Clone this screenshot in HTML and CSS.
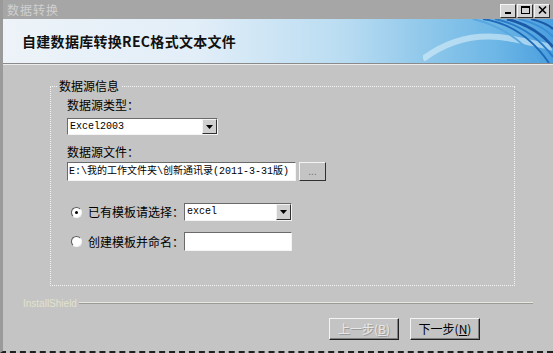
FILE: index.html
```html
<!DOCTYPE html>
<html>
<head>
<meta charset="utf-8">
<link rel="stylesheet" href="styles.css">
</head>
<body>
<div class="window">
  <div class="titlebar">
    <span class="title">数据转换</span>
    <div class="ctrls">
      <span class="cb"><svg width="13" height="11" viewBox="0 0 13 11"><rect x="3" y="7" width="6" height="2" fill="#000"/></svg></span>
      <span class="cb"><svg width="13" height="11" viewBox="0 0 13 11"><rect x="2.5" y="1.5" width="8" height="7" fill="none" stroke="#000"/><rect x="2" y="1" width="9" height="2" fill="#000"/></svg></span>
      <span class="cb"><svg width="13" height="11" viewBox="0 0 13 11"><path d="M3 1.5 L10 8.5 M10 1.5 L3 8.5" stroke="#000" stroke-width="1.6"/></svg></span>
    </div>
  </div>
  <div class="banner">
    <h1 class="heading">自建数据库转换REC格式文本文件</h1>
    <svg class="swoosh" width="130" height="44" viewBox="0 0 130 44">
      <path d="M0 40 Q40 10 90 20 T130 30" fill="none" stroke="#d8eef8" stroke-width="6" opacity="0.6"/>
      <path d="M60 0 Q100 6 126 44" fill="none" stroke="#1e6ab8" stroke-width="2"/>
      <path d="M72 0 Q108 8 130 38" fill="none" stroke="#2a7cc8" stroke-width="2"/>
      <path d="M84 0 Q114 8 130 28" fill="none" stroke="#1a5aa8" stroke-width="3"/>
      <path d="M96 0 Q120 6 130 18" fill="none" stroke="#3b8ed8" stroke-width="2"/>
      <path d="M108 0 Q124 4 130 10" fill="none" stroke="#1a5aa8" stroke-width="2"/>
      <path d="M50 0 Q92 10 116 44" fill="none" stroke="#5aa8e0" stroke-width="2"/>
    </svg>
  </div>
  <div class="sep"></div>
  <div class="main">
    <fieldset class="group">
      <legend class="legend">数据源信息</legend>
      <div class="lbl first">数据源类型：</div>
      <div class="combo combo-type"><span class="val">Excel2003</span><span class="arrow"><svg width="7" height="4" viewBox="0 0 7 4"><path d="M0 0 H7 L3.5 4 Z" fill="#000"/></svg></span></div>
      <div class="lbl second">数据源文件：</div>
      <div class="filerow">
        <div class="field field-path">E:\我的工作文件夹\创新通讯录(2011-3-31版)</div>
        <span class="btn-small">...</span>
      </div>
      <div class="radiorow r1">
        <span class="radio checked"></span>
        <span class="rlabel">已有模板请选择：</span>
        <div class="combo combo-tpl"><span class="val">excel</span><span class="arrow"><svg width="7" height="4" viewBox="0 0 7 4"><path d="M0 0 H7 L3.5 4 Z" fill="#000"/></svg></span></div>
      </div>
      <div class="radiorow r2">
        <span class="radio"></span>
        <span class="rlabel">创建模板并命名：</span>
        <div class="field field-name"></div>
      </div>
    </fieldset>
    <div class="brand">
      <span class="brand-text">InstallShield</span>
      <span class="brand-line"></span>
    </div>
    <div class="buttons">
      <span class="btn disabled">上一步(<u>B</u>)</span>
      <span class="btn">下一步(<u>N</u>)</span>
    </div>
  </div>
</div>
</body>
</html>
```

FILE: styles.css
```css
html, body {
  margin: 0;
  padding: 0;
  background: #ffffff;
}
body {
  width: 553px;
  height: 353px;
  overflow: hidden;
  font-family: "Noto Sans CJK SC", "DejaVu Sans", sans-serif;
  font-size: 12px;
  color: #000;
}
.window {
  width: 553px;
  height: 353px;
  box-sizing: border-box;
  background: #c4c4c4;
  border-left: 3px solid #9a9a9a;
  border-bottom: 2px dashed #202020;
  display: flex;
  flex-direction: column;
}
.titlebar {
  height: 19px;
  background: #a6a6a6;
  display: flex;
  align-items: center;
  justify-content: space-between;
  padding: 0 3px 0 4px;
}
.title {
  color: #d0d0d0;
  font-size: 12px;
  line-height: 19px;
  letter-spacing: 1px;
}
.ctrls {
  display: flex;
  gap: 1px;
  margin-top: 2px;
}
.cb {
  width: 14px;
  height: 12px;
  background: #d4d4d4;
  border: 1px solid;
  border-color: #f4f4f4 #303030 #303030 #f4f4f4;
  display: flex;
  align-items: center;
  justify-content: center;
}
.banner {
  height: 44px;
  background: linear-gradient(90deg, #edf3f8 0%, #e2eef8 35%, #b9dcf2 62%, #8cc6ea 78%, #6cb6e6 90%, #4a9ede 100%);
  display: flex;
  align-items: center;
  justify-content: space-between;
  overflow: hidden;
}
.heading {
  margin: 0 0 0 19px;
  font-size: 14px;
  font-weight: bold;
  color: #111;
  letter-spacing: 0.3px;
}
.swoosh {
  flex: none;
  align-self: stretch;
}
.sep {
  height: 1px;
  background: #8a8a8a;
  border-bottom: 1px solid #ececec;
}
.main {
  flex: 1;
  display: flex;
  flex-direction: column;
}
.group {
  margin: 14px 0 0 47px;
  width: 465px;
  height: 207px;
  box-sizing: border-box;
  border: 1px dotted #f4f4f4;
  padding: 0 0 0 16px;
  min-inline-size: 0;
}
.legend {
  padding: 0 2px;
  margin-left: -10px;
  font-size: 12px;
  line-height: 14px;
}
.lbl {
  font-size: 12px;
  line-height: 14px;
}
.lbl.first {
  margin-top: 5px;
}
.combo {
  display: flex;
  align-items: stretch;
  background: #fff;
  border: 1px solid;
  border-color: #6a6a6a #f4f4f4 #f4f4f4 #6a6a6a;
  box-sizing: border-box;
}
.combo-type {
  width: 151px;
  height: 17px;
  margin-top: 6px;
}
.val {
  flex: 1;
  font-family: "Liberation Mono", monospace;
  font-size: 10px;
  line-height: 15px;
  padding-left: 2px;
}
.arrow {
  width: 15px;
  background: #d0d0d0;
  border: 1px solid;
  border-color: #f4f4f4 #303030 #303030 #f4f4f4;
  display: flex;
  align-items: center;
  justify-content: center;
  box-sizing: border-box;
}
.lbl.second {
  margin-top: 10px;
}
.filerow {
  display: flex;
  gap: 3px;
  margin-top: 3px;
  align-items: stretch;
  height: 19px;
}
.field {
  background: #fff;
  border: 1px solid;
  border-color: #6a6a6a #f4f4f4 #f4f4f4 #6a6a6a;
  box-sizing: border-box;
}
.field-path {
  width: 229px;
  font-size: 10px;
  line-height: 17px;
  padding-left: 1px;
  white-space: nowrap;
  overflow: hidden;
  font-family: "Liberation Mono", "Noto Sans CJK SC", monospace;
}
.btn-small {
  width: 27px;
  box-sizing: border-box;
  background: #c4c4c4;
  border: 1px solid;
  border-color: #f4f4f4 #303030 #303030 #f4f4f4;
  color: #777;
  font-size: 10px;
  text-align: center;
  line-height: 15px;
}
.radiorow {
  display: flex;
  align-items: center;
  margin-left: 4px;
}
.radiorow.r1 {
  margin-top: 22px;
}
.radiorow.r2 {
  margin-top: 11px;
}
.radio {
  width: 11px;
  height: 11px;
  border-radius: 50%;
  background: #fff;
  box-sizing: border-box;
  border: 1px solid;
  border-color: #5a5a5a #f4f4f4 #f4f4f4 #5a5a5a;
  display: flex;
  align-items: center;
  justify-content: center;
}
.radio.checked::after {
  content: "";
  width: 3px;
  height: 3px;
  border-radius: 50%;
  background: #000;
}
.rlabel {
  margin-left: 6px;
  width: 96px;
  font-size: 12px;
  line-height: 14px;
}
.combo-tpl {
  width: 108px;
  height: 18px;
}
.field-name {
  width: 108px;
  height: 19px;
}
.brand {
  display: flex;
  align-items: center;
  margin: 11px 20px 0 20px;
  height: 12px;
}
.brand-text {
  font-family: "Liberation Sans", sans-serif;
  font-size: 10px;
  color: #e2e2cc;
  padding-right: 2px;
}
.brand-line {
  flex: 1;
  height: 1px;
  background: #e8e8dc;
  border-bottom: 1px solid #9a9a9a;
}
.buttons {
  display: flex;
  justify-content: flex-end;
  gap: 11px;
  margin: 9px 73px 0 0;
}
.btn {
  width: 70px;
  height: 22px;
  box-sizing: border-box;
  border: 1px solid;
  border-color: #f4f4f4 #202020 #202020 #f4f4f4;
  box-shadow: inset -1px -1px 0 #808080;
  text-align: center;
  font-size: 12px;
  line-height: 19px;
}
.btn u {
  text-decoration: underline;
}
.btn.disabled {
  color: #e8e8e8;
  text-shadow: 1px 1px 0 #9c9c9c;
}
```
